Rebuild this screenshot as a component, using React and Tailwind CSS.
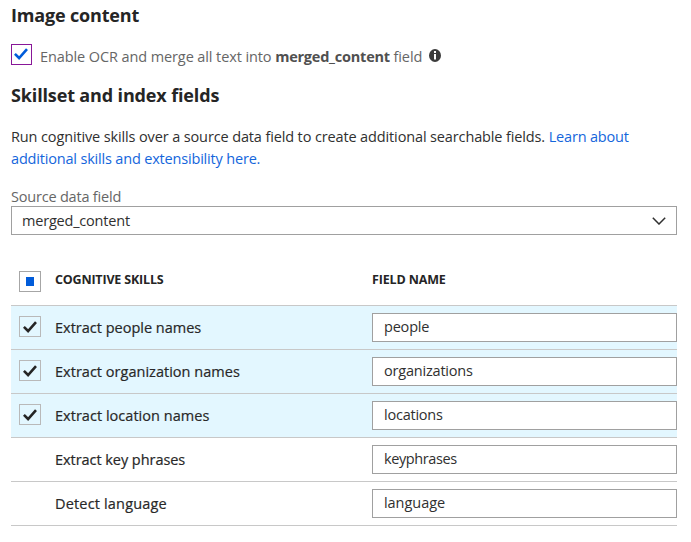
import React from "react";

const skills = [
  { name: "Extract people names", field: "people", checked: true, track: "tracking-[0px]", fieldTrack: "tracking-[-0.2px]" },
  { name: "Extract organization names", field: "organizations", checked: true, track: "tracking-[0.02px]", fieldTrack: "tracking-[-0.2px]" },
  { name: "Extract location names", field: "locations", checked: true, track: "tracking-[0.03px]", fieldTrack: "tracking-[-0.23px]" },
  { name: "Extract key phrases", field: "keyphrases", checked: false, track: "tracking-[-0.05px]", fieldTrack: "tracking-[-0.4px]" },
  { name: "Detect language", field: "language", checked: false, track: "tracking-[0.17px]", fieldTrack: "tracking-[-0.05px]" },
];

function Check({ className }) {
  return (
    <svg viewBox="0 0 14 12" className={className} fill="none" stroke="currentColor" strokeWidth="2.6">
      <path d="M.9 5.8 5.1 10 13 1.2" />
    </svg>
  );
}

export default function App() {
  return (
    <main className="h-[542px] w-[691px] overflow-hidden bg-white pl-[11px] font-['Open_Sans','Noto_Sans',sans-serif] text-[14.5px] text-[#303030]">
      <div className="w-[666px]">
        <h1 className="h-[44px] pt-[3px] text-[18px] leading-[24px] font-bold tracking-[-0.17px] whitespace-nowrap text-[#252525]">Image content</h1>
        <div className="flex h-[39px]">
          <div className="flex h-[21px] w-[21px] items-center justify-center border border-[#881798]">
            <Check className="-mt-[1px] -ml-[1px] h-[12px] w-[14px] text-[#015cda]" />
          </div>
          <p className="ml-[8px] pt-[3px] leading-[20px] tracking-[-0.1px] whitespace-nowrap text-[#666]">
            Enable OCR and merge all text into <strong className="font-bold tracking-[-0.23px] text-[#505050]">merged_content</strong> field
          </p>
          <svg viewBox="0 0 12 13" className="mt-[5px] ml-[7px] h-[13px] w-[12px]">
            <ellipse cx="6" cy="6.5" rx="6" ry="6.5" fill="#3c3c3c" />
            <path d="M5 2h2v2H5zM5 5h2v5.5H5z" fill="#fff" />
          </svg>
        </div>
        <h2 className="h-[43px] text-[18px] leading-[24px] font-bold tracking-[-0.14px] whitespace-nowrap text-[#252525]">Skillset and index fields</h2>
        <p className="h-[60px] leading-[22px] whitespace-nowrap">
          <span className="tracking-[-0.13px]">Run cognitive skills over a source data field to create additional searchable fields. </span>
          <a className="tracking-[-0.18px] text-[#1466dc]">Learn about<br />additional skills and extensibility here.</a>
        </p>
        <label className="block h-[20px] pt-[1px] leading-[20px] tracking-[-0.2px] text-[#666]">Source data field</label>
        <div className="flex h-[29px] items-center justify-between border border-[#a0a0a0] pr-[10px] pl-[10px]">
          <span className="leading-[20px] tracking-[-0.2px]">merged_content</span>
          <svg viewBox="0 0 14 8" className="h-[8px] w-[14px]" fill="none" stroke="#303030" strokeWidth="1.5">
            <path d="M.8.8 7 7 13.2.8" />
          </svg>
        </div>
        <div className="flex h-[71px] items-start border-b border-[#c8c8c8] pt-[36px] pl-[8px] text-[12.5px] leading-[18px] font-bold text-[#252525]">
          <div className="flex h-[21px] w-[22px] items-center justify-center border border-[#a6a6a6]">
            <div className="h-[9px] w-[8px] bg-[#015cda]" />
          </div>
          <div className="ml-[14px] w-[317px] tracking-[-0.18px]">COGNITIVE SKILLS</div>
          <div className="tracking-[-0.15px]">FIELD NAME</div>
        </div>
        {skills.map((s) => (
          <div key={s.name} className={`flex h-[44px] items-start border-b border-[#c8c8c8] pl-[8px] ${s.checked ? "bg-[#e3f7ff]" : "bg-white"}`}>
            <div className="mt-[10px] h-[21px] w-[22px]">
              {s.checked && (
                <div className="flex h-full w-full items-center justify-center border border-[#b9b9b9]">
                  <Check className="h-[12px] w-[14px] text-[#252525]" />
                </div>
              )}
            </div>
            <div className={`mt-[12px] ml-[14px] w-[317px] leading-[20px] font-medium whitespace-nowrap text-[#282828] [-webkit-text-stroke:0.2px_#282828] ${s.track}`}>{s.name}</div>
            <div className="mt-[7px] flex h-[29px] w-[305px] items-center border border-[#a0a0a0] bg-white pl-[11px]">
              <span className={`-mt-[1px] leading-[20px] ${s.fieldTrack}`}>{s.field}</span>
            </div>
          </div>
        ))}
      </div>
    </main>
  );
}
